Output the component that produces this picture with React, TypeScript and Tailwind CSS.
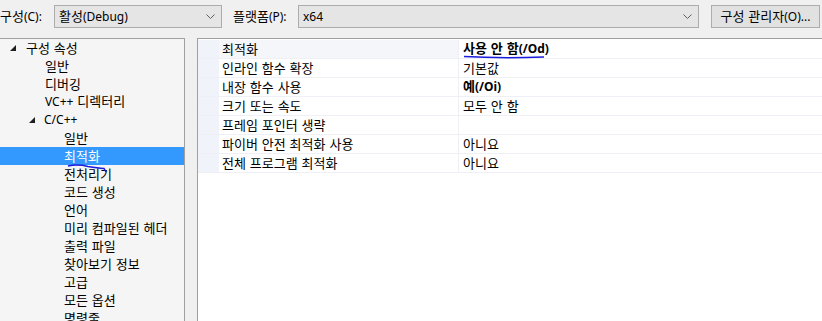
import React from "react";

const Tri = () => (
  <svg width="6" height="6" viewBox="0 0 6 6" className="shrink-0">
    <polygon points="6,0 6,6 0,6" fill="#1e1e1e" />
  </svg>
);

const Chevron = () => (
  <svg width="9" height="5" viewBox="0 0 9 5" className="shrink-0">
    <polyline points="0.5,0.5 4.5,4.5 8.5,0.5" fill="none" stroke="#606060" strokeWidth="1" />
  </svg>
);

// Hangul in a CJK face at 13px, Latin runs in a narrower latin face at 12px
const T = ({ s }: { s: string }) => {
  const parts = s.split(/([A-Za-z0-9()\/+.:]+)/);
  return (
    <span className="whitespace-nowrap">
      {parts.map((p, i) =>
        /[A-Za-z0-9()\/+.:]/.test(p) ? (
          <span key={i} className="text-[12px]" style={{ fontFamily: '"Noto Sans", sans-serif' }}>
            {p}
          </span>
        ) : (
          <span key={i}>{p}</span>
        )
      )}
    </span>
  );
};

type TreeItem = { label: string; level: number; expanded?: boolean; selected?: boolean };

const tree: TreeItem[] = [
  { label: "구성 속성", level: 0, expanded: true },
  { label: "일반", level: 1 },
  { label: "디버깅", level: 1 },
  { label: "VC++ 디렉터리", level: 1 },
  { label: "C/C++", level: 1, expanded: true },
  { label: "일반", level: 2 },
  { label: "최적화", level: 2, selected: true },
  { label: "전처리기", level: 2 },
  { label: "코드 생성", level: 2 },
  { label: "언어", level: 2 },
  { label: "미리 컴파일된 헤더", level: 2 },
  { label: "출력 파일", level: 2 },
  { label: "찾아보기 정보", level: 2 },
  { label: "고급", level: 2 },
  { label: "모든 옵션", level: 2 },
  { label: "명령줄", level: 2 },
];

const rows: { name: string; value: string; bold?: boolean; sel?: boolean }[] = [
  { name: "최적화", value: "사용 안 함(/Od)", bold: true, sel: true },
  { name: "인라인 함수 확장", value: "기본값" },
  { name: "내장 함수 사용", value: "예(/Oi)", bold: true },
  { name: "크기 또는 속도", value: "모두 안 함" },
  { name: "프레임 포인터 생략", value: "" },
  { name: "파이버 안전 최적화 사용", value: "아니요" },
  { name: "전체 프로그램 최적화", value: "아니요" },
];

export default function App() {
  return (
    <div
      className="relative w-[822px] h-[321px] overflow-hidden bg-[#f0f0f0] text-[13px] leading-none text-black flex flex-col [word-spacing:1px]"
      style={{ fontFamily: '"Noto Sans CJK KR", "Noto Sans", sans-serif' }}
    >
      {/* Top bar */}
      <div className="h-[38px] shrink-0 flex items-start pt-[5px]">
        <div className="w-[54px] h-[23px] flex items-center pb-[1px]">
          <T s="구성(C):" />
        </div>
        <div className="w-[168px] h-[23px] border border-[#acacac] bg-[#e5e5e5] flex items-center pl-[4px] pr-[6px] pb-[1px]">
          <span className="flex-1">
            <T s="활성(Debug)" />
          </span>
          <Chevron />
        </div>
        <div className="w-[11px]" />
        <div className="w-[65px] h-[23px] flex items-center pb-[1px]">
          <T s="플랫폼(P):" />
        </div>
        <div className="w-[401px] h-[23px] border border-[#acacac] bg-[#e5e5e5] flex items-center pl-[4px] pr-[6px] pb-[1px]">
          <span className="flex-1">
            <T s="x64" />
          </span>
          <Chevron />
        </div>
        <div className="w-[12px]" />
        <div className="w-[109px] h-[23px] border border-[#adadad] bg-[#e1e1e1] flex items-center justify-center pb-[1px]">
          <T s="구성 관리자(O)..." />
        </div>
      </div>

      {/* Panes */}
      <div className="flex flex-1 min-h-0">
        <div className="w-[185px] shrink-0 border-t border-r border-[#a0a0a0] bg-[#f5f5f5] flex flex-col">
          {tree.map((t, i) => (
            <div
              key={i}
              className={`h-[18px] shrink-0 flex items-center pb-[2px] ${t.selected ? "bg-[#3399ff] text-white" : ""}`}
              style={{ paddingLeft: t.level === 0 ? 10 : t.level === 1 ? (t.expanded ? 29 : 45) : 64 }}
            >
              {t.expanded && (
                <span className={`flex items-center pt-[2px] ${t.level === 0 ? "w-[16px]" : "w-[15px]"}`}>
                  <Tri />
                </span>
              )}
              <T s={t.label} />
            </div>
          ))}
        </div>
        <div className="w-[12px] shrink-0" />
        <div className="flex-1 border-t border-l border-[#a0a0a0] bg-white pt-[1px] flex flex-col">
          {rows.map((r, i) => (
            <div key={i} className="h-[19px] shrink-0 flex border-b border-[#eef0f6]">
              <div className="w-[21px] shrink-0 bg-[#f0f3f9]" />
              <div className={`w-[240px] shrink-0 flex items-center pl-[3px] pb-[2px] border-r border-[#eef0f6] ${r.sel ? "bg-[#f4f6fa]" : "bg-white"}`}>
                <T s={r.name} />
              </div>
              <div className={`flex-1 flex items-center pl-[4px] pb-[2px] ${r.bold ? "font-bold" : ""}`}>
                <T s={r.value} />
              </div>
            </div>
          ))}
        </div>
      </div>

      {/* hand-drawn annotations */}
      <svg className="absolute left-0 top-0 pointer-events-none" width="822" height="321">
        <path d="M464 56.5 Q500 58.5 544 57" fill="none" stroke="#1b1bdc" strokeWidth="1.5" />
        <path d="M68 166 Q78 164 88 166.5 Q98 168 104 168.5 L106 172" fill="none" stroke="#1b1bdc" strokeWidth="1.5" />
      </svg>
    </div>
  );
}
